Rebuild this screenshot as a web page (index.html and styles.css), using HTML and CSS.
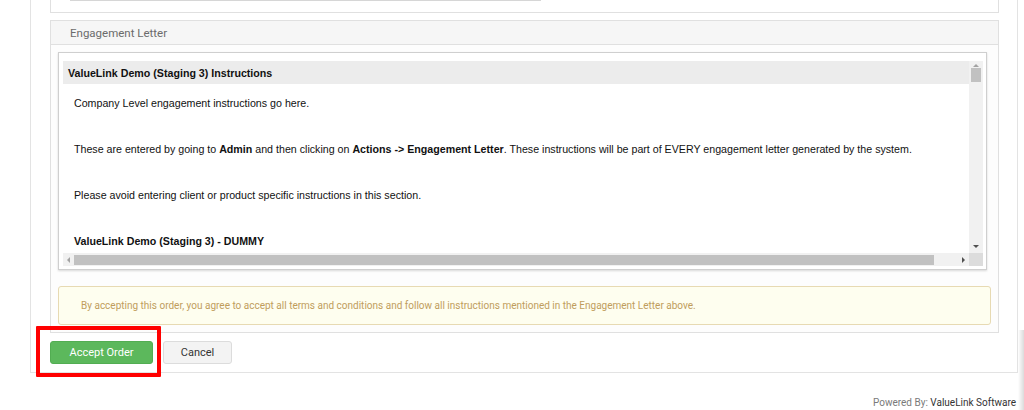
FILE: index.html
```html
<!DOCTYPE html>
<html lang="en">
<head>
<meta charset="utf-8">
<title>Engagement Letter</title>
<link rel="stylesheet" href="styles.css">
</head>
<body>
<div class="card">
  <div class="prev-panel"><div class="prev-input"></div></div>
  <div class="panel">
    <div class="panel-heading">Engagement Letter</div>
    <div class="panel-body">
      <div class="letter">
        <div class="scroller">
          <div class="letter-content">
            <div class="letter-title">ValueLink Demo (Staging 3) Instructions</div>
            <div class="letter-text">
              <p>Company Level engagement instructions go here.</p>
              <p>These are entered by going to <b>Admin</b> and then clicking on <b>Actions -&gt; Engagement Letter</b>. These instructions will be part of EVERY engagement letter generated by the system.</p>
              <p>Please avoid entering client or product specific instructions in this section.</p>
              <p><b>ValueLink Demo (Staging 3) - DUMMY</b></p>
            </div>
          </div>
          <div class="vbar">
            <span class="arrow arrow-up"></span>
            <span class="vthumb"></span>
            <span class="arrow arrow-down"></span>
          </div>
          <div class="hbar">
            <span class="arrow arrow-left"></span>
            <span class="hthumb"></span>
            <span class="arrow arrow-right"></span>
          </div>
          <div class="corner"></div>
        </div>
      </div>
      <div class="notice">By accepting this order, you agree to accept all terms and conditions and follow all instructions mentioned in the Engagement Letter above.</div>
    </div>
  </div>
  <div class="actions">
    <button class="btn btn-accept">Accept Order</button>
    <button class="btn btn-cancel">Cancel</button>
    <span class="highlight"></span>
  </div>
</div>
<footer class="footer">Powered By: <span class="brand">ValueLink Software</span></footer>
<div class="edge-shadow"></div>
</body>
</html>
```

FILE: styles.css
```css
html, body {
  margin: 0;
  padding: 0;
  background: #ffffff;
}

body {
  font-family: Roboto, "Liberation Sans", Arial, sans-serif;
  color: #333;
  width: 1024px;
  height: 410px;
  overflow: hidden;
  position: relative;
}

.card {
  margin-left: 30px;
  width: 988px;
  box-sizing: border-box;
  border: 1px solid #e3e3e3;
  border-top: none;
  padding: 0 18px 8px 19px;
}

.prev-panel {
  height: 12px;
  border: 1px solid #e0e0e0;
  border-top: none;
  padding-left: 19px;
}

.prev-input {
  width: 471px;
  height: 1px;
  background: #d6d6d6;
}

.panel {
  margin-top: 7px;
  border: 1px solid #e0e0e0;
  background: #fdfdfd;
}

.panel-heading {
  height: 22px;
  padding-top: 1px;
  line-height: 23px;
  padding-left: 19px;
  background: #f6f6f6;
  border-bottom: 1px solid #e0e0e0;
  font-size: 11.5px;
  color: #6b6b6b;
}

.panel-body {
  padding: 7px 7px 7px 7px;
}

.letter {
  width: 929px;
  box-sizing: border-box;
  border: 1px solid #cfcfcf;
  background: #fff;
  padding: 8px 3px 3px 4px;
  box-shadow: 0 1px 2px rgba(0, 0, 0, 0.15);
}

.scroller {
  display: grid;
  grid-template-columns: 1fr 14px;
  grid-template-rows: 192px 13px;
  font-family: "Liberation Sans", Arial, sans-serif;
  font-size: 10.67px;
  color: #111;
}

.letter-content {
  overflow: hidden;
}

.letter-title {
  height: 22px;
  padding-top: 1px;
  line-height: 23px;
  background: #ececec;
  padding-left: 5px;
  font-weight: bold;
  white-space: nowrap;
}

.letter-text {
  padding: 12px 0 0 11px;
  display: flex;
  flex-direction: column;
  gap: 31px;
}

.letter-text p {
  margin: 0;
  line-height: 15px;
  white-space: nowrap;
}

.vbar {
  background: #f1f1f1;
  display: flex;
  flex-direction: column;
  align-items: center;
}

.vthumb {
  width: 10px;
  height: 14px;
  background: #c1c1c1;
  margin-top: 1px;
  flex: none;
}

.hbar {
  background: #f1f1f1;
  display: flex;
  align-items: center;
}

.hthumb {
  width: 860px;
  height: 10px;
  background: #c1c1c1;
  margin-left: 4px;
  flex: none;
}

.corner {
  background: #dcdcdc;
}

.arrow {
  display: block;
  width: 0;
  height: 0;
  flex: none;
  border-style: solid;
}

.arrow-up {
  margin-top: 3px;
  border-width: 0 3px 3px 3px;
  border-color: transparent transparent #a3a3a3 transparent;
}

.arrow-down {
  margin-top: auto;
  margin-bottom: 5px;
  border-width: 3px 3px 0 3px;
  border-color: #505050 transparent transparent transparent;
}

.arrow-left {
  margin-left: 4px;
  border-width: 3px 3px 3px 0;
  border-color: transparent #a3a3a3 transparent transparent;
}

.arrow-right {
  margin-left: auto;
  margin-right: 4px;
  border-width: 3px 0 3px 3px;
  border-color: transparent transparent transparent #505050;
}

.notice {
  margin-top: 16px;
  height: 37px;
  line-height: 37px;
  padding-left: 22px;
  background: #fefeef;
  border: 1px solid #e7dab3;
  border-radius: 3px;
  font-size: 10px;
  color: #c09d5c;
  white-space: nowrap;
}

.actions {
  position: relative;
  margin-top: 8px;
  display: flex;
  gap: 10px;
}

.btn {
  height: 23px;
  border-radius: 3px;
  font-family: Roboto, "Liberation Sans", Arial, sans-serif;
  font-size: 11px;
  padding: 0;
  cursor: pointer;
}

.btn-accept {
  width: 103px;
  background: #5cb85c;
  border: 1px solid #52ad52;
  color: #fff;
}

.btn-cancel {
  width: 69px;
  background: #f3f3f3;
  border: 1px solid #dcdcdc;
  color: #333;
}

.highlight {
  position: absolute;
  left: -14px;
  top: -15px;
  width: 125px;
  height: 51px;
  box-sizing: border-box;
  border: 4px solid #ff0000;
  border-radius: 1px;
  pointer-events: none;
}

.footer {
  margin-top: 23px;
  padding-right: 8px;
  text-align: right;
  font-size: 10px;
  line-height: 14px;
  color: #7a7a7a;
}

.brand {
  color: #333;
}

.edge-shadow {
  position: absolute;
  right: 0;
  top: 330px;
  width: 6px;
  height: 80px;
  background: linear-gradient(to right, rgba(0, 0, 0, 0), rgba(0, 0, 0, 0.14));
}
```
